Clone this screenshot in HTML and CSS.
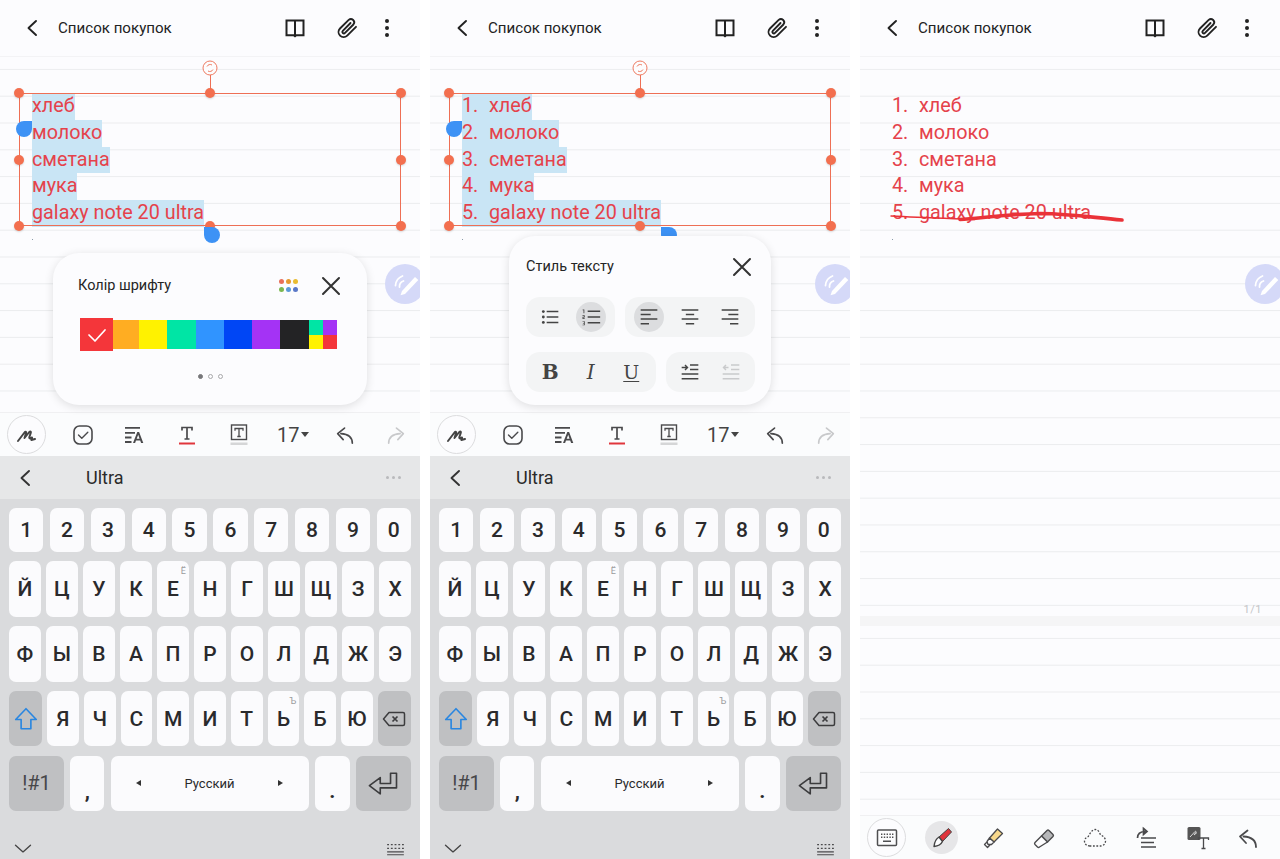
FILE: index.html
```html
<!DOCTYPE html>
<html lang="ru">
<head>
<meta charset="utf-8">
<title>Список покупок</title>
<link rel="stylesheet" href="styles.css">
</head>
<body>
<svg class="defs" aria-hidden="true">
  <symbol id="i-back" viewBox="0 0 24 24"><path d="M16 5 8.500 12l7.500 7" fill="none" stroke="currentColor" stroke-width="1.900" stroke-linecap="round" stroke-linejoin="round"/></symbol>
  <symbol id="i-book" viewBox="0 0 24 24"><path d="M3.500 4.500h17v14.800h-7.200l-1.300 1-1.300-1H3.500zM12 4.500v14.800" fill="none" stroke="currentColor" stroke-width="2"/></symbol>
  <symbol id="i-clip" viewBox="0 0 24 24"><path d="M21 10.800 12.200 19.600a5 5 0 0 1-7.200-7.100L13.700 3.900a3.300 3.300 0 0 1 4.700 4.600L10 16.900a1.500 1.500 0 0 1-2.200-2.100L15.500 7" fill="none" stroke="currentColor" stroke-width="1.900" stroke-linecap="round"/></symbol>
  <symbol id="i-more" viewBox="0 0 24 24"><circle cx="12" cy="5" r="2"/><circle cx="12" cy="12" r="2"/><circle cx="12" cy="19" r="2"/></symbol>
  <symbol id="i-pen" viewBox="0 0 24 24"><path d="M3 18 9.500 9.500c1-1.300 2.200-.6 1.500.8L9.500 15l4.800-6c1-1 2-.5 1.500.8l-1.500 4.400c-.2 1 .5 1.500 1.300.9L17 14.500l-.6 2.500 3.600-1" fill="none" stroke="currentColor" stroke-width="2" stroke-linecap="round" stroke-linejoin="round"/></symbol>
  <symbol id="i-check" viewBox="0 0 24 24"><rect x="3" y="3" width="18" height="18" rx="5.500" fill="none" stroke="currentColor" stroke-width="1.600"/><path d="m7.500 12 3.300 3.300 6-6" fill="none" stroke="currentColor" stroke-width="1.400" stroke-linecap="round" stroke-linejoin="round"/></symbol>
  <symbol id="i-style" viewBox="0 0 24 24"><path d="M3 4.800h15M3 9.800h10M3 14.500h6.500M3 19h6.500" fill="none" stroke="currentColor" stroke-width="1.800"/><path d="M11 20 15.300 9h1.800L21.300 20h-2.200l-.9-2.500h-4.200L13.100 20zM14.700 15.700h2.900l-1.400-4z"/></symbol>
  <symbol id="i-t" viewBox="0 0 24 24"><path d="M7 7.500V4.500h10v3M12 4.500V16M9.500 16h5" fill="none" stroke="currentColor" stroke-width="1.700"/><path d="M4 20.500h16" stroke="#e0363c" stroke-width="2"/></symbol>
  <symbol id="i-tbox" viewBox="0 0 24 24"><rect x="4.500" y="2" width="15" height="14.500" fill="none" stroke="currentColor" stroke-width="1.400"/><path d="M8 7.800V5.500h8v2.300M12 5.500V13.500M10.300 13.500h3.400" fill="none" stroke="currentColor" stroke-width="1.300"/><rect x="3.500" y="19.500" width="17" height="2.500" fill="#d5d6d7"/></symbol>
  <symbol id="i-undo" viewBox="0 0 24 24"><path d="M20 21c0-6.500-4-10-12.500-10.500M11.500 4.500 4 10.500l6 6.500" fill="none" stroke="currentColor" stroke-width="1.800" stroke-linecap="round" stroke-linejoin="round"/></symbol>
  <symbol id="i-redo" viewBox="0 0 24 24"><path d="M4 21c0-6.500 4-10 12.500-10.500M12.500 4.500 20 10.500l-6 6.500" fill="none" stroke="currentColor" stroke-width="1.800" stroke-linecap="round" stroke-linejoin="round"/></symbol>
  <symbol id="i-x" viewBox="0 0 24 24"><path d="M4 4 20 20M20 4 4 20" fill="none" stroke="currentColor" stroke-width="2" stroke-linecap="round"/></symbol>
  <symbol id="i-rotate" viewBox="0 0 16 16"><circle cx="8" cy="8" r="7" fill="#fdfdfe" stroke="#ee7b62" stroke-width="1"/><path d="M5 6.500A3.500 3.500 0 0 1 10 5M11 9.500A3.500 3.500 0 0 1 6 11" fill="none" stroke="#ee7b62" stroke-width="1"/></symbol>
  <symbol id="i-fab" viewBox="0 0 40 40"><circle cx="20" cy="20" r="20" fill="#d5d9f8"/><path d="M17 27 30 13l3.300 3L20 30l-4.500 1.200z" fill="#fff"/><path d="M10.500 21.500a11 11 0 0 1 7-9.500M14.500 23a6 6 0 0 1 4-6" fill="none" stroke="#fff" stroke-width="1.800" stroke-linecap="round"/></symbol>
  <symbol id="i-shift" viewBox="0 0 24 24"><path d="M12 2.500 2.500 12.500h5v8.500h9v-8.500h5z" fill="none" stroke="#2a86e0" stroke-width="1.500" stroke-linejoin="round"/></symbol>
  <symbol id="i-bksp" viewBox="0 0 24 24"><path d="M7 5.500h14a1.500 1.500 0 0 1 1.500 1.500v10a1.500 1.500 0 0 1-1.500 1.500H7L1.500 12z" fill="none" stroke="#3c3c3e" stroke-width="1.500" stroke-linejoin="round"/><path d="m10.500 9.500 5 5M15.500 9.500l-5 5" fill="none" stroke="#3c3c3e" stroke-width="1.700"/></symbol>
  <symbol id="i-enter" viewBox="0 0 30 24"><path d="M27 3h-5.500v9.500H12V7L2 14.500 12 22v-5.500h15z" fill="none" stroke="#3c3c3e" stroke-width="1.500" stroke-linejoin="round"/></symbol>
  <symbol id="i-down" viewBox="0 0 24 24"><path d="M3 7.500 12 15.500l9-8" fill="none" stroke="currentColor" stroke-width="1.600" stroke-linecap="round" stroke-linejoin="round"/></symbol>
  <symbol id="i-kbgrid" viewBox="0 0 20 14" fill="#4b4b4d"><path d="M1 1h2v1.500H1zM5 1h2v1.500H5zM9 1h2v1.500H9zM13 1h2v1.500h-2zM17 1h2v1.500h-2zM1 5h2v1.500H1zM5 5h2v1.500H5zM9 5h2v1.500H9zM13 5h2v1.500h-2zM17 5h2v1.500h-2zM1 9h18v1.300H1zM1 12h18v1.300H1z"/></symbol>
  <symbol id="i-ul" viewBox="0 0 24 24"><circle cx="4" cy="5.500" r="1.700"/><circle cx="4" cy="12" r="1.700"/><circle cx="4" cy="18.500" r="1.700"/><path d="M8 5.500h14M8 12h14M8 18.500h14" fill="none" stroke="currentColor" stroke-width="1.800"/></symbol>
  <symbol id="i-ol" viewBox="0 0 24 24"><path d="M8 5h15M8 12h15M8 19h15" fill="none" stroke="currentColor" stroke-width="1.800"/><path d="M2 3h2v4.500H3V4H2zM1.800 10h2.700v2.500H2.800v1h1.700v.8H1.800v-2.500h1.700v-1H1.800zM1.800 17h2.700v5H1.800v-.8h1.700v-1.300H2.300v-.8h1.200v-1.300H1.800z"/></symbol>
  <symbol id="i-al" viewBox="0 0 24 24"><path d="M2 3.500h20M2 9h12M2 14.500h20M2 20h10" fill="none" stroke="currentColor" stroke-width="1.800"/></symbol>
  <symbol id="i-ac" viewBox="0 0 24 24"><path d="M2 3.500h20M7 9h10M2 14.500h20M7 20h10" fill="none" stroke="currentColor" stroke-width="1.800"/></symbol>
  <symbol id="i-ar" viewBox="0 0 24 24"><path d="M2 3.500h20M10 9h12M2 14.500h20M12 20h10" fill="none" stroke="currentColor" stroke-width="1.800"/></symbol>
  <symbol id="i-in" viewBox="0 0 24 24"><path d="M12 3.500h10M12 9h10M2 14.500h20M2 20h20" fill="none" stroke="currentColor" stroke-width="1.800"/><path d="M2 6.500h6M6 3.500l3 3-3 3" fill="none" stroke="currentColor" stroke-width="1.700"/></symbol>
  <symbol id="i-out" viewBox="0 0 24 24"><path d="M12 3.500h10M12 9h10M2 14.500h20M2 20h20" fill="none" stroke="currentColor" stroke-width="1.800"/><path d="M9 6.500H3M6 3.500l-3 3 3 3" fill="none" stroke="currentColor" stroke-width="1.700"/></symbol>
  <symbol id="i-keys" viewBox="0 0 24 24"><rect x="2.500" y="4" width="19" height="15.500" rx="1" fill="none" stroke="#4f4f51" stroke-width="1.500"/><path d="M6 7.500h1.400v1.400H6zM8.800 7.500h1.400v1.400H8.800zM11.600 7.500H13v1.400h-1.400zM14.400 7.500h1.400v1.400h-1.400zM17 7.500h1.400v1.400H17zM6 10.500h1.400v1.400H6zM8.800 10.500h1.400v1.400H8.800zM11.600 10.500H13v1.400h-1.400zM14.400 10.500h1.400v1.400h-1.400zM17 10.500h1.400v1.400H17zM8 14.500h8v1.400H8z" fill="#4f4f51"/></symbol>
  <symbol id="i-redpen" viewBox="0 0 24 24"><path d="M9 11 18.500 2.500l3 3.500-9 9.500z" fill="#e0343c" stroke="#444" stroke-width="1"/><path d="M9 11c-2.500 1.500-4.500 4-5 9.500 5-.5 7-2 8.500-5z" fill="#fdfdfe" stroke="#444" stroke-width="1.400" stroke-linejoin="round"/></symbol>
  <symbol id="i-marker" viewBox="0 0 24 24"><path d="M8.500 12 16.500 3l5 4.500-8.500 8.500z" fill="#f8d98c" stroke="#4a4a4c" stroke-width="1.300" stroke-linejoin="round"/><path d="M8.500 12l4.500 4-2.500 2.500H7l-1-3zM6 16l-2.500 2.500 3 3L9 19" fill="#fdfdfe" stroke="#4a4a4c" stroke-width="1.300" stroke-linejoin="round"/></symbol>
  <symbol id="i-eraser" viewBox="0 0 24 24"><path d="M10.500 10 16 4.500a1.500 1.500 0 0 1 2 0l4 4a1.500 1.500 0 0 1 0 2L16.500 16z" fill="#b6b7b9" stroke="#4a4a4c" stroke-width="1.400" stroke-linejoin="round"/><path d="M10.500 10 4 16.500a1.500 1.500 0 0 0 0 2l2.500 2.500a1.500 1.500 0 0 0 2 0L16.500 16z" fill="#fdfdfe" stroke="#4a4a4c" stroke-width="1.400" stroke-linejoin="round"/></symbol>
  <symbol id="i-lasso" viewBox="0 0 24 24"><path d="M7 20c-3.500 0-5.500-2-5.500-4.800 0-2.500 1.800-3.700 3.800-4.700C7 7 9.500 3.500 12 3.500c3 0 4.500 2.500 5.500 5.500 3 1 5 3.300 5 6 0 3-2.500 5-5 5z" fill="none" stroke="#4a4a4c" stroke-width="1.300" stroke-dasharray="1.800 1.600"/></symbol>
  <symbol id="i-reflow" viewBox="0 0 24 24"><path d="M7 12h15M7 16.500h13M7 21h15" fill="none" stroke="#4a4a4c" stroke-width="1.700"/><path d="M3.500 12c0-4.500 3-6.500 8-6.500M9.500 2.500l3.500 3-3.500 3z" fill="none" stroke="#4a4a4c" stroke-width="1.700"/></symbol>
  <symbol id="i-conv" viewBox="0 0 24 24"><rect x="1.500" y="1" width="13" height="13" rx="1.500" fill="#555"/><path d="M4 11 9 5.500c.7-.6 1.300 0 .8.800L8 9l3-2.500" fill="none" stroke="#d8d8d8" stroke-width="1"/><path d="M12.500 14v-2h10v2M17.500 12v10.500M15.500 22.500h4" fill="none" stroke="#4a4a4c" stroke-width="1.300"/></symbol>
</svg>

<main class="screen">
  <header class="head">
    <svg class="ico back"><use href="#i-back"/></svg>
    <h1 class="title">Список покупок</h1>
    <svg class="ico h-book"><use href="#i-book"/></svg>
    <svg class="ico h-clip"><use href="#i-clip"/></svg>
    <svg class="ico h-more"><use href="#i-more"/></svg>
  </header>
  <section class="note">
    <div class="lines">
      <div class="line"><span class="sel">хлеб</span></div>
      <div class="line"><span class="sel">молоко</span></div>
      <div class="line"><span class="sel">сметана</span></div>
      <div class="line"><span class="sel">мука</span></div>
      <div class="line"><span class="sel">galaxy note 20 ultra</span></div>
    </div>
    <div class="speck"></div>
    <div class="box">
      <svg class="rotate"><use href="#i-rotate"/></svg><i class="stem"></i>
      <i class="h tl"></i><i class="h tc"></i><i class="h tr"></i><i class="h ml"></i><i class="h mr"></i><i class="h bl"></i><i class="h bc"></i><i class="h br"></i>
    </div>
    <i class="drop drop-l"></i>
    <i class="drop drop-r"></i>
    <svg class="fab"><use href="#i-fab"/></svg>
    <div class="popup popup-color">
      <div class="pop-head">
        <span class="pop-title">Колір шрифту</span>
        <span class="palette"><i class="p1"></i><i class="p2"></i><i class="p3"></i><i class="p4"></i><i class="p5"></i><i class="p6"></i></span>
        <svg class="ico pop-x"><use href="#i-x"/></svg>
      </div>
      <div class="swatches">
        <span class="sw-sel"><svg class="sw-check" viewBox="0 0 24 24"><path d="m4 12 6 6L20 7" fill="none" stroke="#fff" stroke-width="1.700" stroke-linecap="round" stroke-linejoin="round"/></svg></span>
        <i class="sw sw-o"></i><i class="sw sw-y"></i><i class="sw sw-g"></i><i class="sw sw-lb"></i><i class="sw sw-b"></i><i class="sw sw-p"></i><i class="sw sw-k"></i>
        <span class="sw-more"><i class="m1"></i><i class="m2"></i><i class="m3"></i><i class="m4"></i></span>
      </div>
      <div class="pager"><i class="on"></i><i></i><i></i></div>
    </div>
  </section>
  <nav class="tools">
    <span class="tool-circle"><svg class="ico t-pen"><use href="#i-pen"/></svg></span>
    <svg class="ico t-a"><use href="#i-check"/></svg>
    <svg class="ico t-b"><use href="#i-style"/></svg>
    <svg class="ico t-c"><use href="#i-t"/></svg>
    <svg class="ico t-d"><use href="#i-tbox"/></svg>
    <span class="size">17<i class="caret"></i></span>
    <svg class="ico t-e"><use href="#i-undo"/></svg>
    <svg class="ico t-f"><use href="#i-redo"/></svg>
  </nav>
  <div class="suggest">
    <svg class="ico s-back"><use href="#i-back"/></svg>
    <span class="s-word">Ultra</span>
    <span class="s-dots"><i></i><i></i><i></i></span>
  </div>
  <div class="kbd">
    <div class="row r-num"><b class="k">1</b><b class="k">2</b><b class="k">3</b><b class="k">4</b><b class="k">5</b><b class="k">6</b><b class="k">7</b><b class="k">8</b><b class="k">9</b><b class="k">0</b></div>
    <div class="row r-let"><b class="k">Й</b><b class="k">Ц</b><b class="k">У</b><b class="k">К</b><b class="k">Е<small class="sup">Ё</small></b><b class="k">Н</b><b class="k">Г</b><b class="k">Ш</b><b class="k">Щ</b><b class="k">З</b><b class="k">Х</b></div>
    <div class="row r-let"><b class="k">Ф</b><b class="k">Ы</b><b class="k">В</b><b class="k">А</b><b class="k">П</b><b class="k">Р</b><b class="k">О</b><b class="k">Л</b><b class="k">Д</b><b class="k">Ж</b><b class="k">Э</b></div>
    <div class="row r-let"><b class="k dark w33"><svg class="ico k-shift"><use href="#i-shift"/></svg></b><b class="k">Я</b><b class="k">Ч</b><b class="k">С</b><b class="k">М</b><b class="k">И</b><b class="k">Т</b><b class="k">Ь<small class="sup">Ъ</small></b><b class="k">Б</b><b class="k">Ю</b><b class="k dark w33"><svg class="ico k-bksp"><use href="#i-bksp"/></svg></b></div>
    <div class="row r-bot"><b class="k dark w55 sym">!#1</b><b class="k w34 low">,</b><b class="k w198 space"><i class="tri tri-l"></i><span>Русский</span><i class="tri tri-r"></i></b><b class="k w35 low">.</b><b class="k dark w55"><svg class="ico k-enter"><use href="#i-enter"/></svg></b></div>
    <div class="kb-nav"><svg class="ico n-down"><use href="#i-down"/></svg><svg class="ico n-grid"><use href="#i-kbgrid"/></svg></div>
  </div>
</main>

<main class="screen">
  <header class="head">
    <svg class="ico back"><use href="#i-back"/></svg>
    <h1 class="title">Список покупок</h1>
    <svg class="ico h-book"><use href="#i-book"/></svg>
    <svg class="ico h-clip"><use href="#i-clip"/></svg>
    <svg class="ico h-more"><use href="#i-more"/></svg>
  </header>
  <section class="note">
    <div class="lines">
      <div class="line"><span class="sel"><span class="num">1.</span>хлеб</span></div>
      <div class="line"><span class="sel"><span class="num">2.</span>молоко</span></div>
      <div class="line"><span class="sel"><span class="num">3.</span>сметана</span></div>
      <div class="line"><span class="sel"><span class="num">4.</span>мука</span></div>
      <div class="line"><span class="sel"><span class="num">5.</span>galaxy note 20 ultra</span></div>
    </div>
    <div class="speck"></div>
    <div class="box">
      <svg class="rotate"><use href="#i-rotate"/></svg><i class="stem"></i>
      <i class="h tl"></i><i class="h tc"></i><i class="h tr"></i><i class="h ml"></i><i class="h mr"></i><i class="h bl"></i><i class="h bc"></i><i class="h br"></i>
    </div>
    <i class="drop drop-l"></i>
    <i class="drop drop-r2"></i>
    <svg class="fab"><use href="#i-fab"/></svg>
    <div class="popup popup-style">
      <div class="pop-head2">
        <span class="pop-title">Стиль тексту</span>
        <svg class="ico pop-x"><use href="#i-x"/></svg>
      </div>
      <div class="grp-row">
        <div class="grp g89"><span class="gb"><svg class="ico gi"><use href="#i-ul"/></svg></span><span class="gb on"><svg class="ico gi"><use href="#i-ol"/></svg></span></div>
        <div class="grp g130"><span class="gb on"><svg class="ico gi"><use href="#i-al"/></svg></span><span class="gb"><svg class="ico gi"><use href="#i-ac"/></svg></span><span class="gb"><svg class="ico gi"><use href="#i-ar"/></svg></span></div>
      </div>
      <div class="grp-row">
        <div class="grp g130"><span class="gb fmt fb">B</span><span class="gb fmt fi">I</span><span class="gb fmt fu">U</span></div>
        <div class="grp g89"><span class="gb"><svg class="ico gi"><use href="#i-in"/></svg></span><span class="gb dim"><svg class="ico gi"><use href="#i-out"/></svg></span></div>
      </div>
    </div>
  </section>
  <nav class="tools">
    <span class="tool-circle"><svg class="ico t-pen"><use href="#i-pen"/></svg></span>
    <svg class="ico t-a"><use href="#i-check"/></svg>
    <svg class="ico t-b"><use href="#i-style"/></svg>
    <svg class="ico t-c"><use href="#i-t"/></svg>
    <svg class="ico t-d"><use href="#i-tbox"/></svg>
    <span class="size">17<i class="caret"></i></span>
    <svg class="ico t-e"><use href="#i-undo"/></svg>
    <svg class="ico t-f"><use href="#i-redo"/></svg>
  </nav>
  <div class="suggest">
    <svg class="ico s-back"><use href="#i-back"/></svg>
    <span class="s-word">Ultra</span>
    <span class="s-dots"><i></i><i></i><i></i></span>
  </div>
  <div class="kbd">
    <div class="row r-num"><b class="k">1</b><b class="k">2</b><b class="k">3</b><b class="k">4</b><b class="k">5</b><b class="k">6</b><b class="k">7</b><b class="k">8</b><b class="k">9</b><b class="k">0</b></div>
    <div class="row r-let"><b class="k">Й</b><b class="k">Ц</b><b class="k">У</b><b class="k">К</b><b class="k">Е<small class="sup">Ё</small></b><b class="k">Н</b><b class="k">Г</b><b class="k">Ш</b><b class="k">Щ</b><b class="k">З</b><b class="k">Х</b></div>
    <div class="row r-let"><b class="k">Ф</b><b class="k">Ы</b><b class="k">В</b><b class="k">А</b><b class="k">П</b><b class="k">Р</b><b class="k">О</b><b class="k">Л</b><b class="k">Д</b><b class="k">Ж</b><b class="k">Э</b></div>
    <div class="row r-let"><b class="k dark w33"><svg class="ico k-shift"><use href="#i-shift"/></svg></b><b class="k">Я</b><b class="k">Ч</b><b class="k">С</b><b class="k">М</b><b class="k">И</b><b class="k">Т</b><b class="k">Ь<small class="sup">Ъ</small></b><b class="k">Б</b><b class="k">Ю</b><b class="k dark w33"><svg class="ico k-bksp"><use href="#i-bksp"/></svg></b></div>
    <div class="row r-bot"><b class="k dark w55 sym">!#1</b><b class="k w34 low">,</b><b class="k w198 space"><i class="tri tri-l"></i><span>Русский</span><i class="tri tri-r"></i></b><b class="k w35 low">.</b><b class="k dark w55"><svg class="ico k-enter"><use href="#i-enter"/></svg></b></div>
    <div class="kb-nav"><svg class="ico n-down"><use href="#i-down"/></svg><svg class="ico n-grid"><use href="#i-kbgrid"/></svg></div>
  </div>
</main>

<main class="screen">
  <header class="head">
    <svg class="ico back"><use href="#i-back"/></svg>
    <h1 class="title">Список покупок</h1>
    <svg class="ico h-book"><use href="#i-book"/></svg>
    <svg class="ico h-clip"><use href="#i-clip"/></svg>
    <svg class="ico h-more"><use href="#i-more"/></svg>
  </header>
  <section class="note page-1">
    <div class="lines">
      <div class="line"><span><span class="num">1.</span>хлеб</span></div>
      <div class="line"><span><span class="num">2.</span>молоко</span></div>
      <div class="line"><span><span class="num">3.</span>сметана</span></div>
      <div class="line"><span><span class="num">4.</span>мука</span></div>
      <div class="line"><span><span class="num">5.</span>galaxy note 20 ultra</span></div>
    </div>
    <div class="speck"></div>
    <svg class="scribble" viewBox="0 0 236 16"><path d="M1 8C30 9.500 60 10.500 85 11.500" fill="none" stroke="#ea3238" stroke-width="1.400" stroke-linecap="round"/><path d="M70 11.500C90 10.500 110 6.500 150 5.500 185 6 205 10 232 12" fill="none" stroke="#ea3238" stroke-width="3.600" stroke-linecap="round"/></svg>
    <svg class="fab"><use href="#i-fab"/></svg>
    <span class="pageno">1/1</span>
  </section>
  <div class="band"></div>
  <section class="note page-2"></section>
  <nav class="tools tools-pen">
    <span class="tool-circle"><svg class="ico p-ic"><use href="#i-keys"/></svg></span>
    <span class="pen-on"><svg class="ico p-ic"><use href="#i-redpen"/></svg></span>
    <svg class="ico p-ic p-2"><use href="#i-marker"/></svg>
    <svg class="ico p-ic p-3"><use href="#i-eraser"/></svg>
    <svg class="ico p-ic p-4"><use href="#i-lasso"/></svg>
    <svg class="ico p-ic p-5"><use href="#i-reflow"/></svg>
    <svg class="ico p-ic p-6"><use href="#i-conv"/></svg>
    <svg class="ico p-ic p-7"><use href="#i-undo"/></svg>
  </nav>
</main>
</body>
</html>
```

FILE: styles.css
```css
* { box-sizing: border-box; }
html, body { margin: 0; padding: 0; }
body {
  width: 1280px;
  height: 859px;
  overflow: hidden;
  display: flex;
  gap: 10px;
  background: #fff;
  font-family: Roboto, "Noto Sans", sans-serif;
  color: #222;
}
.defs { position: absolute; width: 0; height: 0; }
.ico { display: block; flex: none; fill: currentColor; width: 24px; height: 24px; }
i, b { font-style: normal; display: block; }

.screen {
  width: 420px;
  height: 859px;
  flex: none;
  display: flex;
  flex-direction: column;
  overflow: hidden;
  background: #fcfcfe;
}

/* header */
.head {
  height: 57px;
  flex: none;
  display: flex;
  align-items: center;
  padding-left: 20px;
  border-bottom: 1px solid #f3f3f5;
  color: #222;
}
.title { margin: 0 0 0 14px; font-size: 15.100px; font-weight: 400; width: 221px; white-space: nowrap; }
.h-book { margin-left: 4px; }
.h-clip { margin-left: 28px; }
.h-more { margin-left: 16px; }

/* note */
.note {
  position: relative;
  flex: none;
  height: 355px;
  padding: 36px 0 0 32px;
  background-image: linear-gradient(to bottom, transparent 11.500px, #ebecee 11.500px, #ebecee 12.700px, transparent 12.700px);
  background-size: 100% 26.800px;
}
.lines { color: #e5424b; font-size: 19.800px; line-height: 26.800px; }
.line { height: 26.800px; white-space: nowrap; }
.sel { display: inline-block; background: #c9e5f5; height: 26.800px; }
.num { display: inline-block; width: 27px; }
.speck { width: 1px; height: 1px; margin-top: 12px; background: #8a9aa8; }

.box { position: absolute; left: 19px; top: 36px; width: 382px; height: 133px; border: 1px solid #ee6f55; }
.rotate { position: absolute; left: 182px; top: -34px; width: 16px; height: 16px; }
.stem { position: absolute; left: 189.500px; top: -19px; width: 1px; height: 19px; background: #ee6f55; }
.h { position: absolute; width: 10px; height: 10px; border-radius: 50%; background: #f36f4f; box-shadow: 0 1px 2px rgba(0,0,0,.15); }
.tl, .tc, .tr { top: -6px; }
.ml, .mr { top: 60.500px; }
.bl, .bc, .br { bottom: -6px; }
.tl, .ml, .bl { left: -6px; }
.tc, .bc { left: 185px; }
.tr, .mr, .br { right: -6px; }

.drop { position: absolute; width: 16px; height: 16px; background: #3d92f5; }
.drop-l { left: 16px; top: 64px; border-radius: 50% 0 50% 50%; }
.drop-r { left: 204px; top: 170px; border-radius: 0 50% 50% 50%; }
.drop-r2 { left: 231px; top: 170px; border-radius: 0 50% 50% 50%; }

.fab { position: absolute; left: 385px; top: 207px; width: 40px; height: 40px; }

/* popups */
.popup { position: absolute; background: #fcfcfe; border-radius: 26px; box-shadow: 0 2px 10px rgba(0,0,0,.12); }
.popup-color { left: 53px; top: 196px; width: 314px; height: 152px; padding: 0 24px 0 25px; }
.pop-head { height: 65px; display: flex; align-items: center; }
.pop-title { font-size: 14.500px; color: #252525; white-space: nowrap; }
.palette { display: grid; grid-template-columns: repeat(3, 5px); gap: 3px 2px; margin-left: auto; margin-right: 21px; }
.palette i { width: 5px; height: 5px; border-radius: 50%; }
.p1 { background: #e8705a; } .p2 { background: #e69a30; } .p3 { background: #e9bc32; }
.p4 { background: #7cb850; } .p5 { background: #5a9ad8; } .p6 { background: #5a78c8; }
.pop-x { color: #333; }
.swatches { display: flex; align-items: center; height: 33px; padding-left: 2px; }
.sw-sel { width: 33px; height: 33px; background: #f4363a; display: flex; align-items: center; justify-content: center; flex: none; }
.sw-check { width: 24px; height: 24px; }
.sw { height: 29px; flex: none; width: 28.300px; }
.sw-o { background: #ffad22; width: 26px; }
.sw-y { background: #fff200; }
.sw-g { background: #00e5a5; }
.sw-lb { background: #3094ff; }
.sw-b { background: #0046f5; }
.sw-p { background: #a433f5; }
.sw-k { background: #232325; }
.sw-more { display: grid; grid-template-columns: 14px 14px; grid-template-rows: 14.500px 14.500px; flex: none; }
.m1 { background: #00e5a5; } .m2 { background: #a433f5; } .m3 { background: #fff200; } .m4 { background: #f4363a; }
.pager { display: flex; justify-content: center; gap: 5px; margin-top: 23px; }
.pager i { width: 5px; height: 5px; border-radius: 50%; border: 1px solid #a8a8aa; }
.pager i.on { background: #77777a; border-color: #77777a; }

.popup-style { left: 79px; top: 179px; width: 262px; height: 169px; padding: 0 16px 0 17px; }
.pop-head2 { height: 61px; display: flex; align-items: center; justify-content: space-between; padding-right: 1px; }
.grp-row { display: flex; justify-content: space-between; margin-bottom: 15px; }
.grp { height: 40px; background: #f3f4f5; border-radius: 14px; display: flex; align-items: center; padding: 0 4px; flex: none; }
.g89 { width: 89px; }
.g130 { width: 130px; }
.gb { width: 40.500px; height: 40px; display: flex; align-items: center; justify-content: center; position: relative; color: #444; flex: none; }
.gb.on::before { content: ""; position: absolute; left: 5px; top: 5px; width: 30px; height: 30px; background: #dcdddf; border-radius: 50%; }
.gi { width: 20px; height: 20px; position: relative; }
.dim { color: #c9cacc; }
.fmt { font-family: "DejaVu Serif", serif; font-size: 20px; color: #444; }
.fb { font-weight: 700; }
.fi { font-style: italic; }
.fu { text-decoration: underline; text-underline-offset: 2px; font-size: 19px; }

/* toolbar */
.tools { height: 44px; flex: none; display: flex; align-items: center; padding-left: 7px; background: #fbfcfd; color: #4a4a4c; border-top: 1px solid #f0f0f2; }
.tool-circle { width: 39px; height: 39px; border-radius: 50%; border: 1px solid #dcdcde; background: #fcfcfe; display: flex; align-items: center; justify-content: center; flex: none; }
.t-pen { color: #444; }
.t-a { margin-left: 25px; }
.t-b { margin-left: 27px; }
.t-c { margin-left: 29px; }
.t-d { margin-left: 28px; }
.size { font-size: 20px; margin-left: 26px; color: #444; display: flex; align-items: center; width: 34px; flex: none; }
.caret { width: 0; height: 0; border: 4px solid transparent; border-top: 5px solid #444; border-bottom: 0; margin-left: 2px; }
.t-e { width: 22px; height: 22px; margin-left: 23px; }
.t-f { width: 22px; height: 22px; margin-left: 29px; color: #c8c9cb; }

/* suggestions */
.suggest { height: 43px; flex: none; background: #e6e7e8; display: flex; align-items: center; padding-left: 13px; }
.s-back { color: #333; }
.s-word { margin-left: 49px; font-size: 18px; color: #2a2a2a; }
.s-dots { margin-left: auto; margin-right: 19px; display: flex; gap: 3px; }
.s-dots i { width: 3px; height: 3px; border-radius: 50%; background: #b9babc; }

/* keyboard */
.kbd { flex: none; height: 360px; background: #dadbdd; padding: 9px 9px 0; display: flex; flex-direction: column; gap: 9.300px; }
.row { display: flex; flex: none; height: 55.500px; gap: 5.200px; }
.r-num { height: 44px; gap: 6.500px; }
.r-bot { gap: 6.250px; }
.k { position: relative; flex: 1 1 0; min-width: 0; background: #fbfbfd; border-radius: 7px; display: flex; align-items: center; justify-content: center; font-size: 21px; font-weight: 500; color: #2a2a2c; }
.dark { background: #bfc0c2; }
.w33 { flex: 0 0 33px; }
.w34 { flex: 0 0 34px; }
.w35 { flex: 0 0 35px; }
.w55 { flex: 0 0 55px; }
.w198 { flex: 0 0 198px; }
.sym { font-weight: 400; font-size: 20px; color: #47474a; }
.low { padding-top: 16px; font-weight: 700; }
.space { font-size: 13px; font-weight: 400; justify-content: space-between; padding: 0 25px; }
.tri { width: 0; height: 0; border-top: 3.500px solid transparent; border-bottom: 3.500px solid transparent; }
.tri-l { border-right: 5px solid #333; }
.tri-r { border-left: 5px solid #333; }
.sup { position: absolute; right: 3px; top: 5px; font-size: 9px; font-weight: 400; color: #9a9a9c; }
.k-shift { width: 26px; height: 26px; }
.k-bksp { width: 24px; height: 24px; }
.k-enter { width: 33px; height: 26px; }
.kb-nav { margin-top: auto; height: 20px; display: flex; justify-content: space-between; align-items: center; padding: 0 6px 0 4px; flex: none; }
.n-down { width: 20px; height: 20px; color: #444; }
.n-grid { width: 19px; height: 13px; }

/* third screen */
.page-1 { height: 559px; }
.band { height: 10px; flex: none; background: #f5f5f6; }
.page-2 { height: 189px; padding: 0; }
.scribble { position: absolute; left: 30px; top: 151px; width: 236px; height: 16px; }
.pageno { position: absolute; right: 18px; top: 546px; font-size: 11px; color: #c4c5c7; letter-spacing: .5px; }
.pen-on { margin-left: 19px; width: 33px; height: 33px; border-radius: 50%; background: #e6e6e8; display: flex; align-items: center; justify-content: center; flex: none; }
.p-2 { margin-left: 23px; }
.p-3 { margin-left: 26px; }
.p-4 { margin-left: 28px; }
.p-5 { margin-left: 27px; }
.p-6 { margin-left: 28px; }
.p-7 { margin-left: 26px; }
```
